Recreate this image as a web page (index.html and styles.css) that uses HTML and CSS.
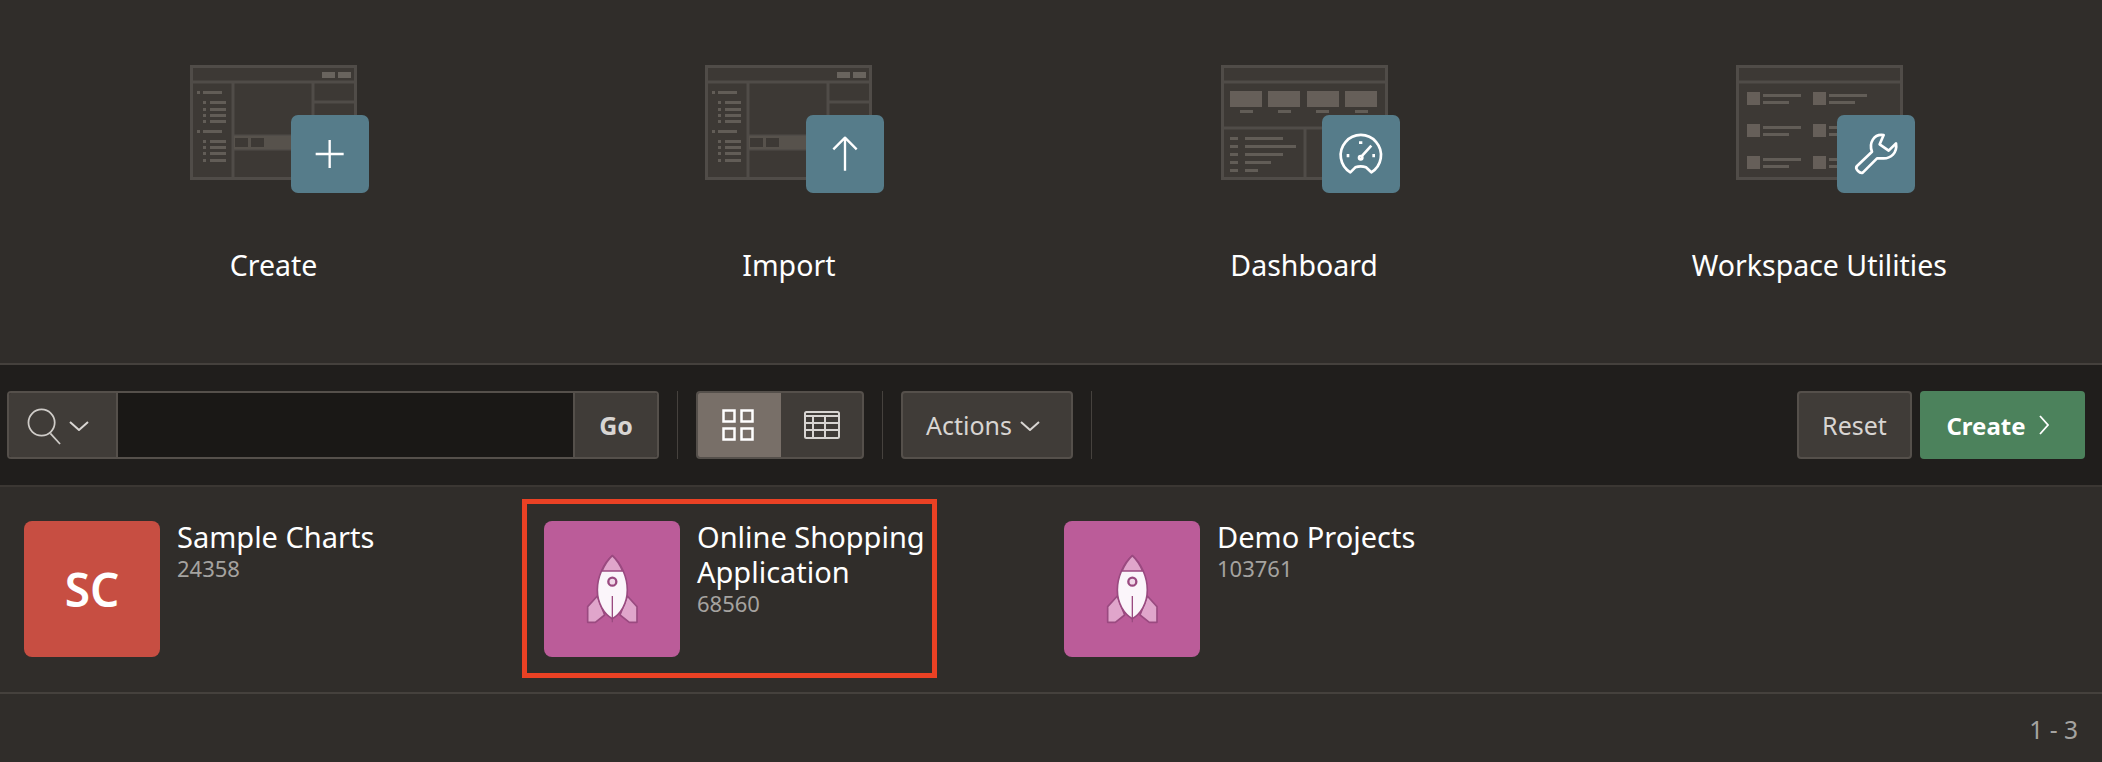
FILE: index.html
```html
<!DOCTYPE html>
<html lang="en">
<head>
<meta charset="utf-8">
<title>App Builder</title>
<link rel="stylesheet" href="styles.css">
</head>
<body>
<svg class="defs" width="0" height="0" aria-hidden="true">
  <defs>
    <g id="wire-app">
      <rect class="frame" x="1.5" y="1.5" width="164" height="112"/>
      <path class="line" d="M1 17H166M43 17V114M123 17V114M123 37H166M123 58H166M43 71H123M43 84H123"/>
      <rect class="mid" x="44" y="71" width="79" height="13"/>
      <rect class="frame-fill" x="45" y="73" width="13" height="9"/>
      <rect class="frame-fill" x="61" y="73" width="13" height="9"/>
      <rect class="btn" x="132" y="7" width="13" height="6"/>
      <rect class="btn" x="148" y="7" width="13" height="6"/>
      <path class="bars" d="M7 26h3v3H7zM13 26h19v3H13zM13 36h3v3h-3zM20 36h16v3H20zM13 43h3v3h-3zM20 43h16v3H20zM13 49h3v3h-3zM20 49h16v3H20zM13 55h3v3h-3zM20 55h16v3H20zM7 65h3v3H7zM13 65h19v3H13zM13 75h3v3h-3zM20 75h16v3H20zM13 81h3v3h-3zM20 81h16v3H20zM13 87h3v3h-3zM20 87h16v3H20zM13 94h3v3h-3zM20 94h16v3H20z"/>
    </g>
  </defs>
</svg>

<section class="hero">
  <a class="tile">
    <span class="tile-art">
      <svg class="wire" viewBox="0 0 167 115"><use href="#wire-app"/></svg>
      <span class="badge">
        <svg viewBox="0 0 234 234"><path d="M116 75V159M74 117H158" stroke-width="7"/></svg>
      </span>
    </span>
    <span class="tile-label">Create</span>
  </a>
  <a class="tile">
    <span class="tile-art">
      <svg class="wire" viewBox="0 0 167 115"><use href="#wire-app"/></svg>
      <span class="badge">
        <svg viewBox="0 0 234 234"><path d="M117 167V68M82 103 117 68 152 103" stroke-width="7"/></svg>
      </span>
    </span>
    <span class="tile-label">Import</span>
  </a>
  <a class="tile">
    <span class="tile-art">
      <svg class="wire" viewBox="0 0 167 115">
        <rect class="frame" x="1.5" y="1.5" width="164" height="112"/>
        <path class="line" d="M1 17H166M1 63H166M84 63V114"/>
        <path class="cards" d="M9 26h32v16H9zM47 26h32v16H47zM86 26h32v16H86zM124 26h32v16h-32z"/>
        <path class="bars" d="M19 45h13v3H19zM57 45h13v3H57zM95 45h13v3H95zM134 45h13v3h-13zM9 72h8v3H9zM24 72h38v3H24zM9 80h8v3H9zM24 80h51v3H24zM9 88h8v3H9zM24 88h38v3H24zM9 96h8v3H9zM24 96h26v3H24zM9 104h8v3H9zM24 104h13v3H24z"/>
      </svg>
      <span class="badge">
        <svg viewBox="0 0 234 234">
          <path d="M85 172 100 157Q116 151 132 157L148 172A60.500 60.500 0 1 0 85 172Z" stroke-width="8"/>
          <circle cx="116" cy="128" r="5" stroke-width="8"/>
          <path d="M118 125 148 92M111 83H121M78 117V127M155 117V127" stroke-width="8"/>
        </svg>
      </span>
    </span>
    <span class="tile-label">Dashboard</span>
  </a>
  <a class="tile">
    <span class="tile-art">
      <svg class="wire" viewBox="0 0 167 115">
        <rect class="frame" x="1.5" y="1.5" width="164" height="112"/>
        <path class="line" d="M1 17H166"/>
        <path class="cards" d="M11 27h13v13H11zM77 27h13v13H77zM11 59h13v13H11zM77 59h13v13H77zM11 91h13v13H11zM77 91h13v13H77z"/>
        <path class="bars" d="M27 29h38v3H27zM27 36h26v3H27zM93 29h38v3H93zM93 36h26v3H93zM27 61h38v3H27zM27 68h26v3H27zM93 61h38v3H93zM93 68h26v3H93zM27 93h38v3H27zM27 100h26v3H27zM93 93h38v3H93zM93 100h26v3H93z"/>
      </svg>
      <span class="badge">
        <svg viewBox="0 0 234 234"><path d="M140 60 128 88 155 107 177 85C182 115 160 130 140 130L120 130 78 172C70 178 52 162 60 153L105 110C95 85 110 55 140 60Z" stroke-width="8"/></svg>
      </span>
    </span>
    <span class="tile-label">Workspace Utilities</span>
  </a>
</section>

<section class="toolbar">
  <div class="search">
    <button class="search-btn">
      <svg class="ico-search" viewBox="0 0 36 38"><circle cx="15" cy="15" r="13.500"/><path d="M24 26 34 37"/></svg>
      <svg class="ico-chev" viewBox="0 0 20 10"><path d="M1 1 10 9 19 1"/></svg>
    </button>
    <div class="search-input"></div>
    <button class="go-btn">Go</button>
  </div>
  <span class="sep"></span>
  <div class="toggle">
    <button class="toggle-btn is-active">
      <svg viewBox="0 0 32 32" class="ico-grid"><path d="M1.500 1.500h11v11h-11zM19.500 1.500h11v11h-11zM1.500 19.500h11v11h-11zM19.500 19.500h11v11h-11z"/></svg>
    </button>
    <button class="toggle-btn">
      <svg viewBox="0 0 36 28" class="ico-table"><rect x="1" y="1" width="34" height="26" rx="1.500"/><path d="M1 5H35M1 12H35M1 19H35M9 5V27M21 5V27"/></svg>
    </button>
  </div>
  <span class="sep"></span>
  <button class="btn-std actions">Actions
    <svg class="ico-chev" viewBox="0 0 20 10"><path d="M1 1 10 9 19 1"/></svg>
  </button>
  <span class="sep"></span>
  <div class="spacer"></div>
  <button class="btn-std reset">Reset</button>
  <button class="create">Create
    <svg class="ico-right" viewBox="0 0 10 20"><path d="M1 1 9 10 1 19"/></svg>
  </button>
</section>

<section class="cards-row">
  <article class="card">
    <div class="app-icon app-red">SC</div>
    <div class="app-text">
      <div class="app-title">Sample Charts</div>
      <div class="app-id">24358</div>
    </div>
  </article>
  <article class="card">
    <div class="app-icon app-pink">
      <svg class="rocket" viewBox="-9 12 270 270">
        <path class="fin" d="M82 168 53 200V247H76L104 225Z"/>
        <path class="fin" d="M172 168 201 200V247H178L150 225Z"/>
        <path class="body" d="M127 47C155 72 172 112 172 150 172 190 152 222 127 236 102 222 82 190 82 150 82 112 99 72 127 47Z"/>
        <path class="fin" d="M127 47C140 59 150 75 158 93H96C104 75 114 59 127 47Z"/>
        <circle class="win" cx="127" cy="125" r="12"/>
        <path class="mid-line" d="M127 168V247"/>
      </svg>
    </div>
    <div class="app-text">
      <div class="app-title">Online Shopping<br>Application</div>
      <div class="app-id">68560</div>
    </div>
    <span class="highlight"></span>
  </article>
  <article class="card">
    <div class="app-icon app-pink">
      <svg class="rocket" viewBox="-9 12 270 270">
        <path class="fin" d="M82 168 53 200V247H76L104 225Z"/>
        <path class="fin" d="M172 168 201 200V247H178L150 225Z"/>
        <path class="body" d="M127 47C155 72 172 112 172 150 172 190 152 222 127 236 102 222 82 190 82 150 82 112 99 72 127 47Z"/>
        <path class="fin" d="M127 47C140 59 150 75 158 93H96C104 75 114 59 127 47Z"/>
        <circle class="win" cx="127" cy="125" r="12"/>
        <path class="mid-line" d="M127 168V247"/>
      </svg>
    </div>
    <div class="app-text">
      <div class="app-title">Demo Projects</div>
      <div class="app-id">103761</div>
    </div>
  </article>
</section>

<footer class="pager">1 - 3</footer>
</body>
</html>
```
FILE: styles.css
```css
* { box-sizing: border-box; }
html, body { margin: 0; height: 100%; }
body {
  background: #302d2a;
  color: #fff;
  font-family: "Noto Sans", "Open Sans", sans-serif;
  overflow: hidden;
}
button { font-family: inherit; cursor: pointer; padding: 0; }
.defs { position: absolute; }

.hero {
  height: 365px;
  padding: 65px 25px 0 16px;
  display: grid;
  grid-template-columns: repeat(4, 1fr);
  border-bottom: 2px solid #45413d;
}
.tile { display: flex; flex-direction: column; align-items: center; }
.tile-art { position: relative; width: 167px; height: 128px; display: block; }
.wire { display: block; width: 167px; height: 115px; overflow: visible; }
.frame { fill: #3d3935; stroke: #504c48; stroke-width: 3; }
.frame-fill { fill: #3d3935; }
.line { fill: none; stroke: #504c48; stroke-width: 3; }
.mid { fill: #57524c; }
.btn { fill: #69645e; }
.bars { fill: #625d57; }
.cards { fill: #665f59; }
.badge {
  position: absolute;
  left: 101px;
  top: 50px;
  width: 78px;
  height: 78px;
  border-radius: 7px;
  background: #567c8a;
}
.badge svg { display: block; width: 78px; height: 78px; }
.badge path, .badge circle { fill: none; stroke: #fff; stroke-linejoin: round; }
.tile-label {
  margin-top: 54px;
  font-size: 28.500px;
  line-height: 36px;
  color: #fff;
}

.toolbar {
  height: 122px;
  padding: 0 17px 0 7px;
  display: flex;
  align-items: center;
  gap: 18px;
  background: #201e1c;
  border-bottom: 2px solid #3b3733;
}
.spacer { flex: 1; margin-left: -18px; }
.sep { width: 1px; height: 68px; background: #46423e; }
.search {
  width: 652px;
  height: 68px;
  display: flex;
  border: 2px solid #55504b;
  border-radius: 4px;
  overflow: hidden;
}
.search-btn {
  width: 109px;
  background: #403c38;
  border: 0;
  border-right: 2px solid #55504b;
  display: flex;
  align-items: center;
  justify-content: center;
  gap: 7px;
  padding-right: 9px;
}
.ico-search { width: 35px; height: 37px; margin-top: 2px; fill: none; stroke: #cfccc8; stroke-width: 1.800; }
.ico-chev { width: 20px; height: 10px; margin-top: 2px; fill: none; stroke: #d8d5d2; stroke-width: 2; }
.search-input { flex: 1; background: #1a1816; }
.go-btn {
  width: 84px;
  background: #403c38;
  border: 0;
  border-left: 2px solid #55504b;
  color: #d8d5d2;
  font-size: 25px;
  font-weight: 700;
}
.toggle {
  width: 168px;
  height: 68px;
  display: flex;
  border: 2px solid #55504b;
  border-radius: 4px;
  overflow: hidden;
  background: #403c38;
}
.toggle-btn {
  flex: 1;
  border: 0;
  background: transparent;
  display: flex;
  align-items: center;
  justify-content: center;
  padding-left: 1px;
}
.toggle-btn.is-active { flex: 0 0 83px; background: #786f68; padding: 0 4px 0 0; }
.ico-grid { width: 32px; height: 32px; fill: none; stroke: #fff; stroke-width: 2.500; }
.ico-table { width: 36px; height: 28px; fill: none; stroke: #d8d5d2; stroke-width: 2; }
.btn-std {
  height: 68px;
  background: #403c38;
  border: 2px solid #55504b;
  border-radius: 4px;
  color: #d8d5d2;
  font-size: 25px;
  display: flex;
  align-items: center;
  justify-content: center;
}
.actions { width: 172px; gap: 8px; padding-right: 8px; }
.reset { width: 115px; margin-right: -10px; }
.create {
  width: 165px;
  height: 68px;
  background: #4c825c;
  border: 0;
  border-radius: 4px;
  color: #fff;
  font-size: 24px;
  font-weight: 700;
  display: flex;
  align-items: center;
  justify-content: center;
  gap: 13px;
  padding-right: 10px;
}
.ico-right { width: 10px; height: 20px; fill: none; stroke: #fff; stroke-width: 1.800; }

.cards-row {
  height: 207px;
  padding: 34px 0 0 24px;
  display: grid;
  grid-template-columns: repeat(4, 520px);
  border-bottom: 2px solid #45413d;
}
.card { position: relative; display: flex; gap: 17px; align-items: flex-start; }
.app-icon {
  width: 136px;
  height: 136px;
  flex: none;
  border-radius: 8px;
  display: flex;
  align-items: center;
  justify-content: center;
}
.app-red { background: #c74e42; font-size: 46px; font-weight: 600; }
.app-pink { background: #bb5c99; }
.rocket { display: block; width: 90px; height: 90px; }
.rocket .fin { fill: #e0a5cb; stroke: #9a4a80; stroke-width: 5; stroke-linejoin: round; }
.rocket .body { fill: #fbf5fa; stroke: #9a4a80; stroke-width: 5; stroke-linejoin: round; }
.rocket .win { fill: #f0d8e8; stroke: #9a4a80; stroke-width: 7; }
.rocket .mid-line { stroke: #9a4a80; stroke-width: 4; fill: none; }
.app-title { font-size: 29px; line-height: 35px; color: #fff; margin-top: -2px; }
.app-id { font-size: 22px; line-height: 30px; color: #a5a3a0; margin-top: -1px; }
.highlight {
  position: absolute;
  left: -22px;
  top: -22px;
  width: 415px;
  height: 179px;
  border: 5px solid #ea4124;
}
.pager {
  padding: 21px 24px 0 0;
  text-align: right;
  font-size: 24.500px;
  line-height: 30px;
  color: #a5a3a0;
}
```
